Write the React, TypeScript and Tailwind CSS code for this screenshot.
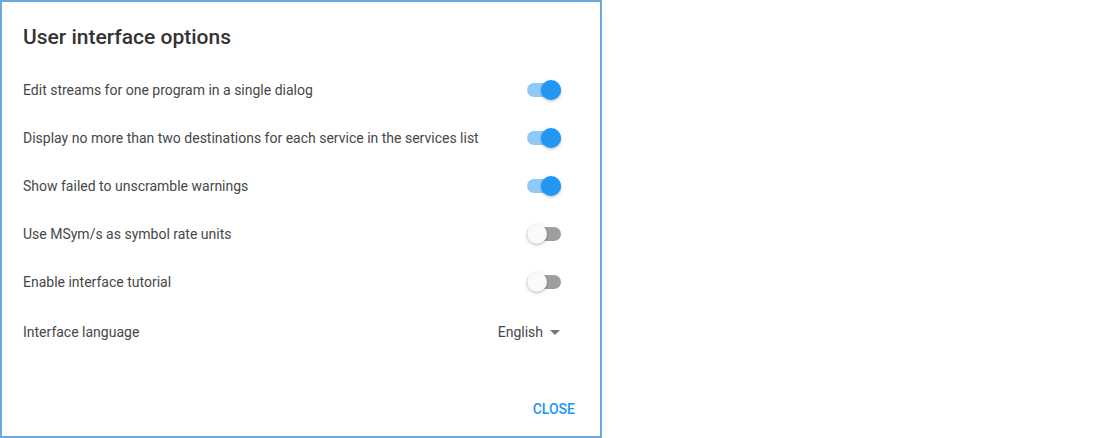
import React, { useState } from "react";

type Option = { label: string; on: boolean };

const initialOptions: Option[] = [
  { label: "Edit streams for one program in a single dialog", on: true },
  { label: "Display no more than two destinations for each service in the services list", on: true },
  { label: "Show failed to unscramble warnings", on: true },
  { label: "Use MSym/s as symbol rate units", on: false },
  { label: "Enable interface tutorial", on: false },
];

const Toggle = ({ on, onClick }: { on: boolean; onClick: () => void }) => (
  <button type="button" onClick={onClick} className="relative w-[34px] h-[20px] flex items-center">
    <span className={`block w-[34px] h-[14px] rounded-full ${on ? "bg-[#90caf9]" : "bg-[#9e9e9e]"}`} />
    <span
      className={`absolute top-0 size-[20px] rounded-full shadow-[0_1px_3px_rgba(0,0,0,0.3)] ${
        on ? "left-[14px] bg-[#2196f3]" : "left-0 bg-[#fafafa]"
      }`}
    />
  </button>
);

export default function App() {
  const [options, setOptions] = useState(initialOptions);

  const flip = (i: number) =>
    setOptions(options.map((o, idx) => (idx === i ? { ...o, on: !o.on } : o)));

  return (
    <div className="w-[602px] h-[438px] bg-white border-2 border-[#6fa8dc] flex flex-col font-['Roboto',sans-serif]">
      <h2 className="pl-[21px] pt-[21px] text-[21px] leading-[28px] font-medium text-[#333333]">
        User interface options
      </h2>
      {/* options */}
      <div className="mt-[15px] pl-[21px] pr-[39px]">
        {options.map((o, i) => (
          <div key={o.label} className="h-[48px] flex items-center justify-between">
            <span className="text-[14px] text-[#474747]">{o.label}</span>
            <Toggle on={o.on} onClick={() => flip(i)} />
          </div>
        ))}
        <div className="h-[52px] flex items-center justify-between">
          <span className="text-[14px] text-[#474747]">Interface language</span>
          <div className="flex items-center gap-[6px] text-[14px] text-[#474747]">
            English
            <svg width="12" height="12" viewBox="0 0 12 12">
              <path d="M1 4 L6 9 L11 4 Z" fill="#757575" />
            </svg>
          </div>
        </div>
      </div>
      <div className="mt-auto flex justify-end pr-[17px] pb-[9px]">
        <button type="button" className="h-[36px] px-[8px] text-[14px] font-medium uppercase text-[#2196f3]">
          Close
        </button>
      </div>
    </div>
  );
}
